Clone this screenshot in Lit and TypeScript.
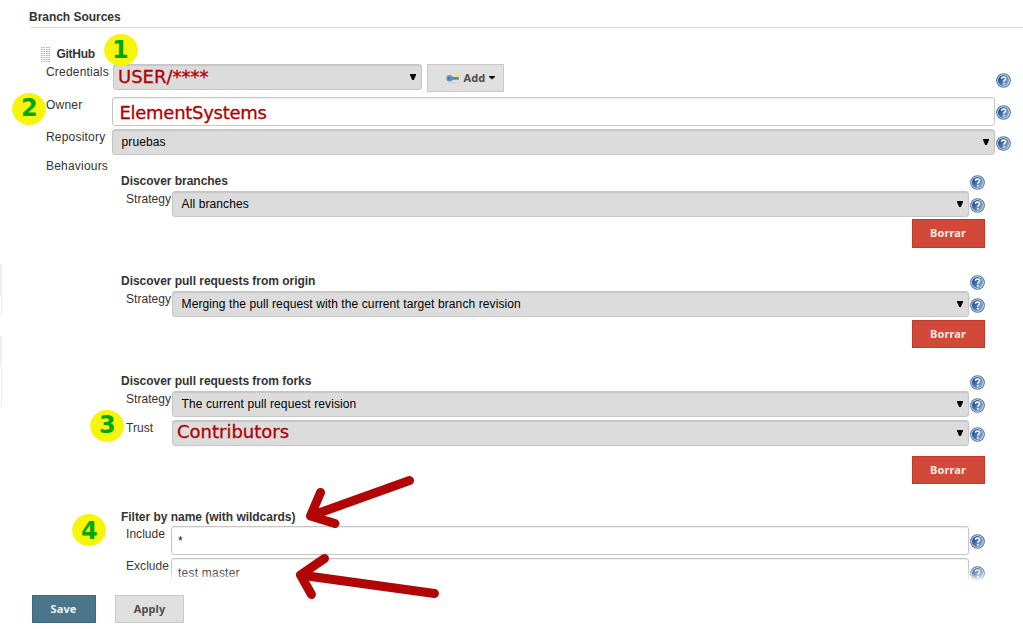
import { LitElement, html, css, svg } from "lit";
import { customElement, property } from "lit/decorators.js";

@customElement("help-icon")
class HelpIcon extends LitElement {
  static styles = css`
    :host { display: block; width: 15px; height: 15px; flex: none; }
    svg { display: block; }
  `;
  render() {
    return html`<svg width="15" height="15" viewBox="0 0 15 15">
      <defs>
        <linearGradient id="g" x1="0" y1="0.2" x2="1" y2="0.8">
          <stop offset="0.1" stop-color="#214f91" />
          <stop offset="0.5" stop-color="#5079b0" />
          <stop offset="1" stop-color="#9ab5d8" />
        </linearGradient>
      </defs>
      <circle cx="7.5" cy="7.5" r="6.8" fill="#e6edf6" stroke="#4b73aa" stroke-width="1.1" />
      <circle cx="7.5" cy="7.5" r="5.5" fill="url(#g)" />
      <path d="M5.5 5.7 C5.6 3.4 9.7 3.4 9.6 5.8 C9.5 7.2 7.7 7 7.7 8.8" fill="none" stroke="#fff" stroke-width="1.5" />
      <rect x="6.9" y="9.9" width="1.7" height="1.6" fill="#fff" />
    </svg>`;
  }
}

@customElement("form-select")
class FormSelect extends LitElement {
  @property() value = "";
  @property({ type: Boolean }) note = false;
  static styles = css`
    :host { display: block; flex: 1; min-width: 0; }
    .box {
      box-sizing: border-box; height: 26px; display: flex; align-items: center;
      justify-content: space-between; border: 1px solid #c6c6c6; border-radius: 3px;
      background: #dcdcdc; box-shadow: inset 0 1px 1px rgba(0, 0, 0, 0.1);
      padding: 0 5px 0 8.6px; color: #000; font-size: 12px; letter-spacing: 0.1px;
      white-space: nowrap;
    }
    .note { padding-left: 4px; }
    .note span {
      font: 18px/20px "DejaVu Sans", sans-serif; letter-spacing: 0; color: #b00000;
      -webkit-text-stroke: 0.3px #b00000; margin-top: -2px;
    }
    :host([lowered]) .note span { margin-top: 0; }
    svg { display: block; flex: none; }
  `;
  render() {
    return html`<div class="box ${this.note ? "note" : ""}">
      <span>${this.value}</span>
      <svg width="6" height="6" viewBox="0 0 6 6"><path d="M0 0H6V1L3.800 6H2.200L0 1Z" fill="#000" /></svg>
    </div>`;
  }
}

@customElement("app-root")
class AppRoot extends LitElement {
  static styles = css`
    :host {
      display: block; position: relative; width: 1023px; height: 629px; overflow: hidden;
      background: #fff; color: #333; font: 12px/16px "Liberation Sans", Arial, sans-serif;
      letter-spacing: 0.2px;
    }
    .form { position: relative; height: 583px; overflow: hidden; }
    .fade {
      position: absolute; left: 0; right: 0; bottom: 0; height: 17px;
      background: linear-gradient(rgba(255, 255, 255, 0), rgba(255, 255, 255, 0.35) 50%, #fff 90%);
    }
    .title { box-sizing: border-box; height: 28px; margin-left: 30px; border-bottom: 1px solid #ddd; padding-top: 9px; }
    .title b { margin-left: -1px; }
    b { font-size: 12px; letter-spacing: -0.03px; white-space: nowrap; }
    .source { box-sizing: border-box; height: 36px; padding: 18px 0 0 41px; display: flex; gap: 6.5px; }
    .source b { letter-spacing: -0.3px; }
    .row { display: flex; align-items: flex-start; box-sizing: border-box; }
    .outer { padding: 0 12px 0 46px; }
    .inner { padding: 0 38px 0 126px; }
    .outer .label { width: 66px; flex: none; }
    .inner .label { width: 46px; flex: none; letter-spacing: 0.05px; }
    .label { white-space: nowrap; }
    .h16 { height: 16px; padding-top: 1px; } .h28 { height: 28px; } .h29 { height: 29px; }
    .h32 { height: 32px; } .h33 { height: 33px; } .h36 { height: 36px; }
    .cred { width: 309px; flex: none; display: flex; margin-left: 1px; }
    help-icon { margin: 7px 0 0 1px; }
    .inner help-icon { margin-top: 6.500px; }
    .low, .inner .low { margin-top: 8px; }
    .push { margin-left: auto; margin-top: 9px; }
    .head { height: 18px; display: flex; justify-content: space-between; padding: 0 38px 0 121px; }
    .head help-icon { margin-top: 1.500px; }
    .filter { height: 17px; }
    .input {
      flex: 1; box-sizing: border-box; height: 29px; border: 1px solid #c6c6c6; border-radius: 3px;
      box-shadow: inset 0 1px 1px rgba(0, 0, 0, 0.07); padding: 6px 6px 0; color: #111;
      letter-spacing: 0.22px;
    }
    .inner .input { margin-left: -1px; }
    .outer .owner {
      font: 18px/20px "DejaVu Sans", sans-serif; color: #b00000; padding: 5px 6px 0 6.5px;
      letter-spacing: -0.28px; -webkit-text-stroke: 0.3px #b00000;
    }
    .actions { box-sizing: border-box; height: 54px; padding-right: 38px; display: flex; justify-content: flex-end; align-items: flex-start; }
    .gap1 { padding-top: 1px; }
    .last { height: 53px; }
    .btn {
      box-sizing: border-box; height: 28px; display: flex; align-items: center; justify-content: center;
      border: 1px solid #c9c9c9; background: #e0e0e0; color: #4d4d4d; padding-bottom: 2px;
      font: bold 11px "Noto Sans", sans-serif; letter-spacing: 0.1px;
    }
    .add { width: 77px; margin-left: 5px; gap: 3.5px; padding-left: 10px; }
    .add svg { margin-top: 2px; }
    .danger { width: 73px; height: 29px; background: #d24939; border-color: #bd3b2c; color: #f7e9e5; padding-right: 1px; }
    .short { height: 28px; }
    .footer { display: flex; gap: 19px; padding: 12px 0 0 32px; }
    .save { width: 64px; background: #4b758b; border-color: #40677b; color: #eef3f5; padding-right: 1px; }
    .apply { width: 69px; }
    .marks { position: absolute; inset: 0; width: 1023px; height: 629px; pointer-events: none; }
    .num { font: bold 24px "DejaVu Sans", sans-serif; fill: #00a80a; letter-spacing: 0; }
  `;

  grip() {
    return html`<svg width="9" height="16" viewBox="0 0 9 16">
      ${[0, 2, 4, 6, 8, 10, 12, 14].map((y) => [0, 2.5, 5, 7.5].map((x) => svg`<rect x=${x} y=${y + 1} width="1.6" height="1" fill="#b0b0b0" />`))}
    </svg>`;
  }

  select(label: string, value: string, height: string, note = false) {
    return html`<div class="row inner ${height}">
      <span class="label">${label}</span>
      <form-select .value=${value} .note=${note}></form-select>
      <help-icon></help-icon>
    </div>`;
  }

  head(text: string) {
    return html`<div class="head"><b>${text}</b><help-icon></help-icon></div>`;
  }

  marker(n: number, cx: number, cy: number, tx: number, ty: number) {
    return svg`<ellipse cx=${cx} cy=${cy} rx="16.9" ry="16" fill="#f8f50c" />
      <text class="num" x=${tx} y=${ty}>${n}</text>`;
  }

  render() {
    return html`
      <div class="form">
        <div class="title"><b>Branch Sources</b></div>
        <div class="source">${this.grip()}<b>GitHub</b></div>
        <div class="row outer h33">
          <span class="label">Credentials</span>
          <div class="cred"><form-select lowered .value=${"USER/****"} .note=${true}></form-select></div>
          <div class="btn add">
            <svg width="14" height="12" viewBox="0 0 14 12">
              <ellipse cx="6.5" cy="11" rx="5" ry="0.8" fill="#d2d2d2" />
              <circle cx="3.6" cy="6.3" r="3.2" fill="#6293c9" />
              <rect x="5" y="5" width="8" height="2.8" rx="0.7" fill="#5286c1" />
              <circle cx="3" cy="6.4" r="1.1" fill="#386ba8" />
              <circle cx="10.8" cy="3" r="2.2" fill="#f4e94d" />
            </svg>
            <span>Add</span>
            <svg width="6" height="4" viewBox="0 0 6 4"><path d="M0 0H6V1L3 3.5L0 1Z" fill="#111" /></svg>
          </div>
          <help-icon class="push"></help-icon>
        </div>
        <div class="row outer h32">
          <span class="label">Owner</span>
          <div class="input owner">ElementSystems</div>
          <help-icon class="low"></help-icon>
        </div>
        <div class="row outer h28">
          <span class="label">Repository</span>
          <form-select .value=${"pruebas"}></form-select>
          <help-icon></help-icon>
        </div>
        <div class="row outer h16"><span class="label">Behaviours</span></div>

        ${this.head("Discover branches")}
        ${this.select("Strategy", "All branches", "h28")}
        <div class="actions"><div class="btn danger">Borrar</div></div>

        ${this.head("Discover pull requests from origin")}
        ${this.select("Strategy", "Merging the pull request with the current target branch revision", "h28")}
        <div class="actions gap1"><div class="btn danger short">Borrar</div></div>

        ${this.head("Discover pull requests from forks")}
        ${this.select("Strategy", "The current pull request revision", "h29")}
        ${this.select("Trust", "Contributors", "h36", true)}
        <div class="actions last"><div class="btn danger short">Borrar</div></div>

        <div class="head filter"><b>Filter by name (with wildcards)</b></div>
        <div class="row inner h32">
          <span class="label">Include</span><div class="input">*</div><help-icon class="low"></help-icon>
        </div>
        <div class="row inner h32">
          <span class="label">Exclude</span><div class="input">test master</div><help-icon class="low"></help-icon>
        </div>
        <div class="fade"></div>
      </div>
      <div class="footer"><div class="btn save">Save</div><div class="btn apply">Apply</div></div>
      <svg class="marks" viewBox="0 0 1023 629">
        <g fill="#f0f0f0">
          <rect x="0" y="264" width="2" height="52" /><rect x="0" y="336" width="2" height="71" />
        </g>
        <g fill="#fff"><rect x="0" y="296" width="1" height="19" /><rect x="0" y="367" width="1" height="39" /></g>
        ${this.marker(1, 121, 50, 112, 58)}
        ${this.marker(2, 29, 109, 21, 116)}
        ${this.marker(3, 107, 426, 99, 433)}
        ${this.marker(4, 89, 530, 81, 539)}
        <g fill="none" stroke="#b20505" stroke-width="9" stroke-linecap="round" stroke-linejoin="round">
          <path d="M409.5 480.5L310.5 516M320.5 492.5L310.5 516L335 523.5" />
          <path d="M434.5 593.5L300.500 575M324.500 558.500L300.500 575L311.500 594.500" />
        </g>
      </svg>
    `;
  }
}
